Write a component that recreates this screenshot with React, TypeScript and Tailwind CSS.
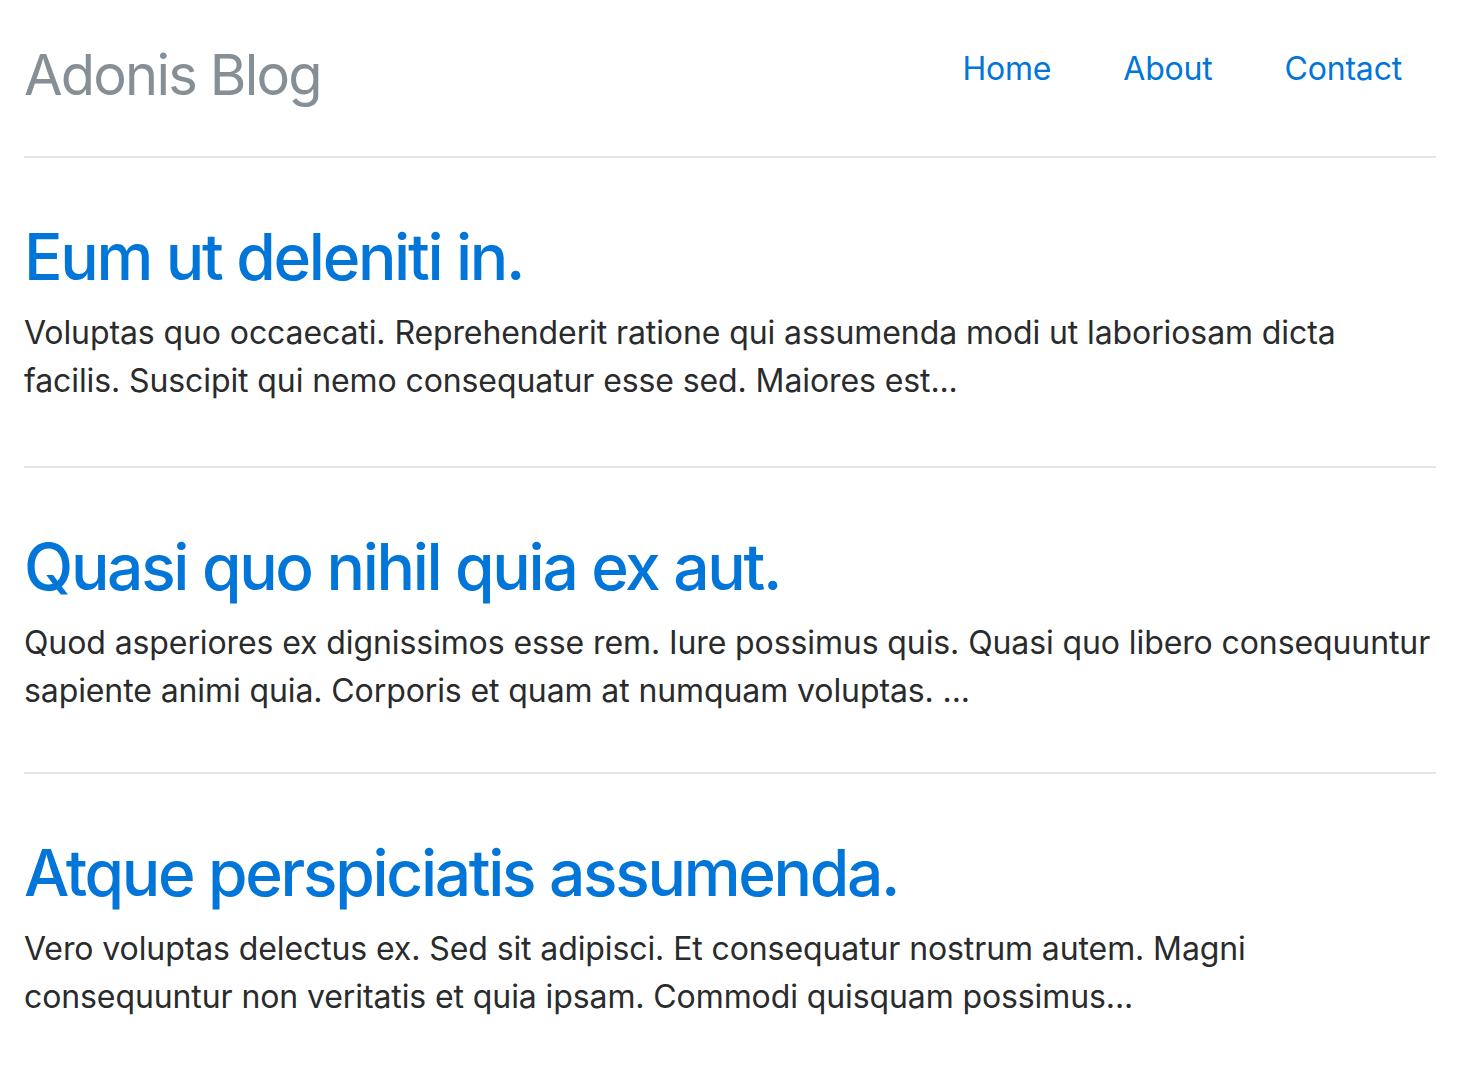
const posts = [
  {
    title: "Eum ut deleniti in.",
    lines: [
      "Voluptas quo occaecati. Reprehenderit ratione qui assumenda modi ut laboriosam dicta",
      "facilis. Suscipit qui nemo consequatur esse sed. Maiores est...",
    ],
  },
  {
    title: "Quasi quo nihil quia ex aut.",
    lines: [
      "Quod asperiores ex dignissimos esse rem. Iure possimus quis. Quasi quo libero consequuntur",
      "sapiente animi quia. Corporis et quam at numquam voluptas. ...",
    ],
  },
  {
    title: "Atque perspiciatis assumenda.",
    lines: [
      "Vero voluptas delectus ex. Sed sit adipisci. Et consequatur nostrum autem. Magni",
      "consequuntur non veritatis et quia ipsam. Commodi quisquam possimus...",
    ],
  },
];

const navItems = ["Home", "About", "Contact"];

export default function App() {
  return (
    <div className="min-h-screen bg-white font-['Inter',sans-serif]">
      <div className="ml-[24px] w-[1412px]">
        {/* Header */}
        <header className="flex justify-between items-start h-[158px] border-b-2 border-[#e5e5e5]">
          <h3 className="mt-[42px] text-[56px] leading-[67px] text-[#868e96] tracking-[-1.8px]">
            Adonis Blog
          </h3>
          <nav className="flex mt-[45px] mr-[2px]">
            {navItems.map((item) => (
              <a
                key={item}
                href="#"
                className="px-[36px] last:pr-[32px] text-[32px] leading-[48px] text-[#0275d8] tracking-[-0.2px]"
              >
                {item}
              </a>
            ))}
          </nav>
        </header>

        {/* Posts */}
        {posts.map((post, i) => (
          <article
            key={post.title}
            className={`pt-[60px] ${i === 0 ? "pb-[61px]" : "pb-[57px]"} ${
              i < posts.length - 1 ? "border-b-2 border-[#e5e5e5]" : ""
            }`}
          >
            <h2 className="text-[64px] leading-[77px] font-medium text-[#0275d8] tracking-[-2.3px] mb-[14px]">
              {post.title}
            </h2>
            <p className="text-[32px] leading-[48px] text-[#292b2c] tracking-[-0.1px]">
              {post.lines.map((line) => (
                <span key={line} className="block whitespace-nowrap">
                  {line}
                </span>
              ))}
            </p>
          </article>
        ))}
      </div>
    </div>
  );
}
